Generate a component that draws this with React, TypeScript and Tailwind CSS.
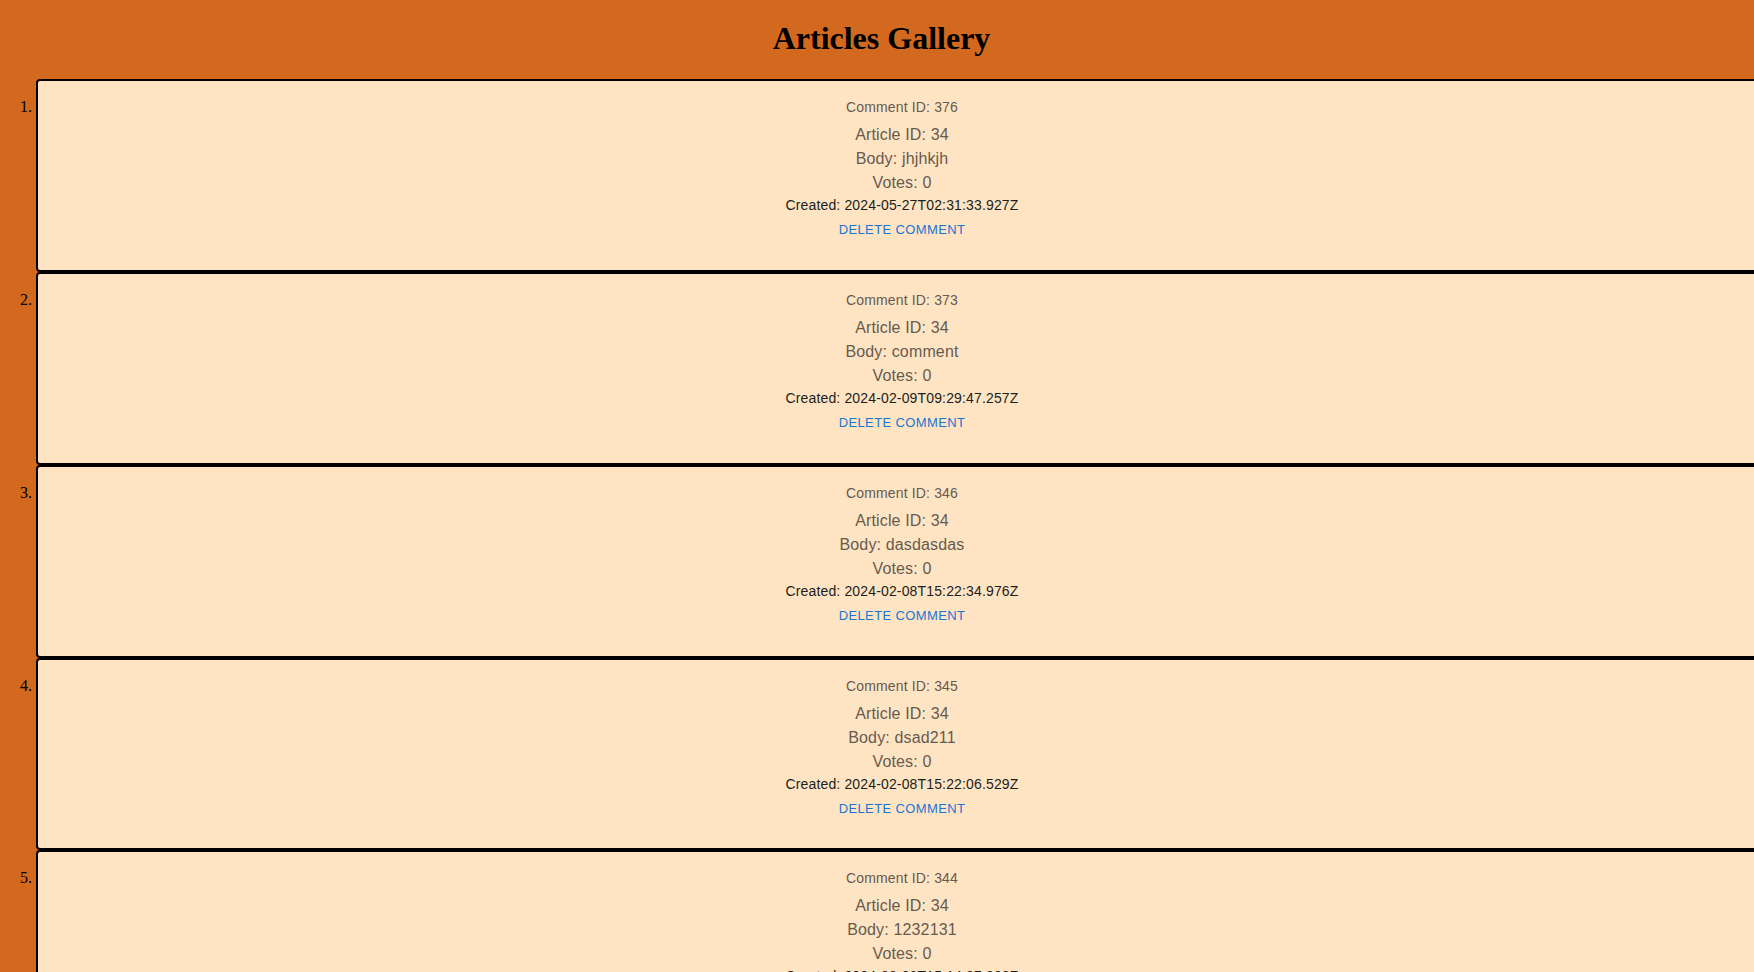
import React from "react";

type Comment = {
  id: number;
  articleId: number;
  body: string;
  votes: number;
  created: string;
};

const comments: Comment[] = [
  { id: 376, articleId: 34, body: "jhjhkjh", votes: 0, created: "2024-05-27T02:31:33.927Z" },
  { id: 373, articleId: 34, body: "comment", votes: 0, created: "2024-02-09T09:29:47.257Z" },
  { id: 346, articleId: 34, body: "dasdasdas", votes: 0, created: "2024-02-08T15:22:34.976Z" },
  { id: 345, articleId: 34, body: "dsad211", votes: 0, created: "2024-02-08T15:22:06.529Z" },
  { id: 344, articleId: 34, body: "1232131", votes: 0, created: "2024-02-08T15:14:37.802Z" },
  { id: 343, articleId: 34, body: "test", votes: 0, created: "2024-02-08T15:10:12.114Z" },
];

function CommentCard({ c }: { c: Comment }) {
  return (
    <div className="w-[1732px] rounded-[4px] border-2 border-black bg-[#ffe4c4] font-['Liberation_Sans',Arial,sans-serif]">
      <div className="flex flex-col items-center px-4 pt-4 pb-6 text-center">
        <p className="mb-[6px] text-[14px] leading-[20.02px] tracking-[0.01071em] text-[#665b4e]">Comment ID: {c.id}</p>
        <p className="text-[16px] leading-[24px] tracking-[0.00938em] text-[#665b4e]">Article ID: {c.articleId}</p>
        <p className="text-[16px] leading-[24px] tracking-[0.00938em] text-[#665b4e]">Body: {c.body}</p>
        <p className="text-[16px] leading-[24px] tracking-[0.00938em] text-[#665b4e]">Votes: {c.votes}</p>
        <p className="text-[14px] leading-[20.02px] tracking-[0.01071em] text-[#211e19]">Created: {c.created}</p>
        <button className="px-[5px] py-[4px] text-[13px] font-medium uppercase leading-[22.75px] tracking-[0.02857em] text-[#1976d2]">
          Delete Comment
        </button>
      </div>
    </div>
  );
}

export default function App() {
  return (
    <div className="min-h-screen w-full overflow-hidden bg-[#d2691e]">
      <div className="w-[1763px] font-['Liberation_Serif','Times_New_Roman',serif] text-black">
        <h1 className="mt-[21.44px] mb-[22.44px] text-center text-[32px] font-bold leading-[35.4px]">Articles Gallery</h1>
        <ol className="list-decimal pl-[36px] text-[16px]">
          {comments.map((c) => (
            <li key={c.id}>
              <CommentCard c={c} />
            </li>
          ))}
        </ol>
      </div>
    </div>
  );
}
